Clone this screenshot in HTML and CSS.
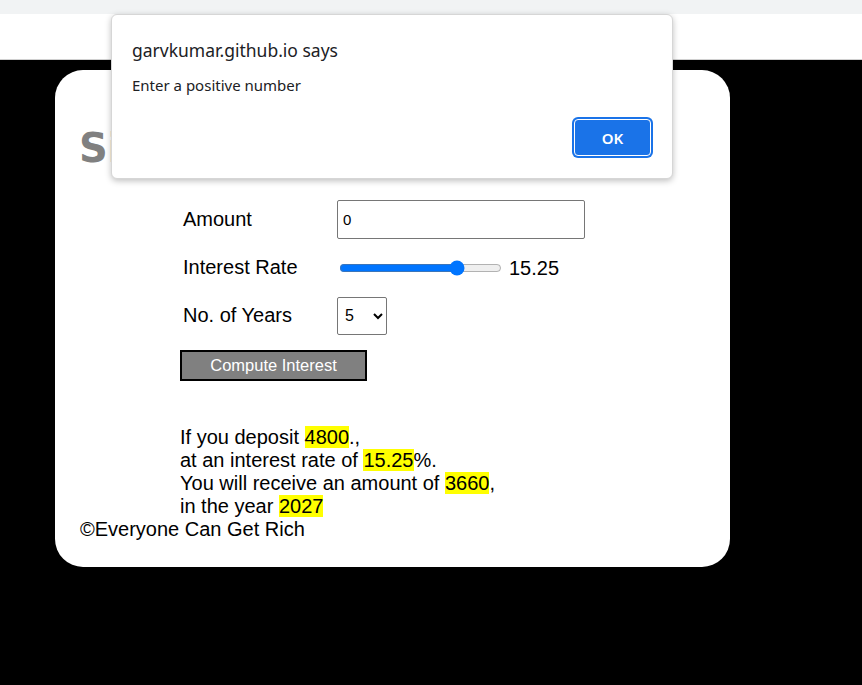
FILE: index.html
```html
<!DOCTYPE html>
<html lang="en">
<head>
<meta charset="utf-8">
<title>Simple Interest Calculator</title>
<link rel="stylesheet" href="styles.css">
</head>
<body>
<div class="chrome"></div>
<div class="topbar"></div>
<main class="stage">
  <div class="card">
    <h1 class="title">Simple Interest Calculator</h1>
    <div class="form">
      <label class="label" for="amount">Amount</label>
      <input class="amount" id="amount" type="number" value="0">
      <label class="label" for="rate">Interest Rate</label>
      <div class="rate-cell">
        <input class="range" id="rate" type="range" min="1" max="20" step="0.25" value="15.25">
        <span class="rate-val">15.25</span>
      </div>
      <label class="label" for="years">No. of Years</label>
      <div>
        <select class="years" id="years">
          <option>1</option><option>2</option><option>3</option><option>4</option>
          <option selected>5</option><option>6</option><option>7</option><option>8</option>
          <option>9</option><option>10</option>
        </select>
      </div>
    </div>
    <button class="compute" type="button">Compute Interest</button>
    <p class="result">If you deposit <mark class="hl">4800</mark>.,<br>at an interest rate of <mark class="hl">15.25</mark>%.<br>You will receive an amount of <mark class="hl">3660</mark>,<br>in the year <mark class="hl">2027</mark></p>
    <p class="footer">&copy;Everyone Can Get Rich</p>
  </div>
</main>
<div class="dialog">
  <div class="dlg-title">garvkumar.github.io says</div>
  <div class="dlg-msg">Enter a positive number</div>
  <div class="dlg-actions"><button class="ok" type="button">OK</button></div>
</div>
</body>
</html>
```
FILE: styles.css
```css
html, body {
  margin: 0;
  padding: 0;
}
body {
  width: 862px;
  height: 685px;
  overflow: hidden;
  font-family: "Liberation Sans", Arial, sans-serif;
  background: #000;
  position: relative;
}
.chrome {
  height: 14px;
  background: #f1f3f4;
}
.topbar {
  height: 45px;
  background: #fff;
  border-bottom: 1px solid #d0d0d0;
}
.stage {
  background: #000;
  padding: 10px 0 0 55px;
}
.card {
  box-sizing: border-box;
  width: 675px;
  height: 497px;
  background: #fff;
  border-radius: 28px;
  padding: 0 25px;
  overflow: hidden;
}
.title {
  margin: 55px 0 0 -1px;
  font-family: "DejaVu Sans", Verdana, sans-serif;
  font-weight: bold;
  font-size: 40px;
  color: #808080;
  white-space: nowrap;
}
.form {
  margin: 29px 0 0 100px;
  display: grid;
  grid-template-columns: 157px auto;
  grid-auto-rows: 39px;
  row-gap: 9px;
  align-items: center;
  justify-items: start;
}
.label {
  font-size: 20px;
  padding-left: 3px;
  color: #000;
}
.amount {
  box-sizing: border-box;
  width: 248px;
  height: 39px;
  margin: 0;
  padding: 0 5px;
  border: 1px solid #767676;
  border-radius: 2px;
  font-family: "Liberation Sans", Arial, sans-serif;
  font-size: 15px;
  color: #000;
}
.rate-cell {
  display: flex;
  align-items: center;
}
.range {
  width: 163px;
  margin: 0 7px 0 2px;
  accent-color: #0075ff;
}
.rate-val {
  font-size: 20px;
  margin-top: 2px;
}
.years {
  box-sizing: border-box;
  width: 50px;
  height: 38px;
  margin: 0;
  padding: 0 0 0 3px;
  border: 1px solid #767676;
  border-radius: 2px;
  background: #fff;
  font-family: "Liberation Sans", Arial, sans-serif;
  font-size: 16px;
  color: #000;
}
.compute {
  display: block;
  box-sizing: border-box;
  margin: 15px 0 0 100px;
  width: 187px;
  height: 31px;
  padding: 0;
  background: #808080;
  border: 2px solid #000;
  border-radius: 0;
  color: #fff;
  font-family: "Liberation Sans", Arial, sans-serif;
  font-size: 16.5px;
}
.result {
  margin: 45px 0 0 100px;
  font-size: 20px;
  line-height: 23px;
  color: #000;
}
.hl {
  background: #ffff00;
  color: #000;
}
.footer {
  margin: 0;
  font-size: 20px;
  line-height: 23px;
  color: #000;
}
.dialog {
  position: absolute;
  left: 111px;
  top: 14px;
  box-sizing: border-box;
  width: 562px;
  height: 165px;
  background: #fff;
  border: 1px solid #d6d6d6;
  border-radius: 6px;
  box-shadow: 0 2px 6px rgba(0,0,0,0.25);
  padding: 23px 20px 0 20px;
  font-family: "Noto Sans", "Open Sans", sans-serif;
  color: #202124;
}
.dlg-title {
  font-size: 17.5px;
  line-height: 24px;
}
.dlg-msg {
  font-size: 15px;
  line-height: 20px;
  margin-top: 13px;
}
.dlg-actions {
  display: flex;
  justify-content: flex-end;
  margin-top: 24px;
  padding-right: 1px;
}
.ok {
  box-sizing: border-box;
  width: 77px;
  height: 37px;
  background: #1a73e8;
  border: 1px solid #fff;
  border-radius: 4px;
  box-shadow: 0 0 0 2px #1a73e8;
  color: #fff;
  font-family: "Noto Sans", "Open Sans", sans-serif;
  font-weight: 600;
  font-size: 15px;
}
```
